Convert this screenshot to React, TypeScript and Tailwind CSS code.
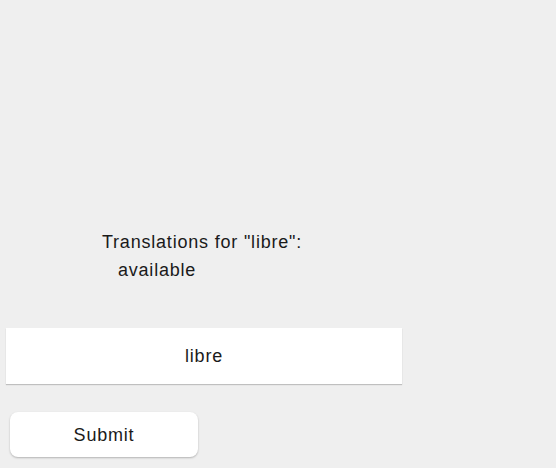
export default function App() {
  return (
    <div className="w-[556px] h-[468px] bg-[#efefef] text-[#1a1a1a] font-['Liberation_Sans',Arial,sans-serif] text-[18px] tracking-[0.8px] flex flex-col">
      <div className="h-[232px]" />
      <div className="w-[404px] flex flex-col items-center">
        <div className="flex flex-col">
          <div className="leading-[20px]">Translations for "libre":</div>
          <div className="leading-[20px] pl-[16px] mt-[8px]">available</div>
        </div>
      </div>
      <div className="h-[48px]" />
      <div className="ml-[6px] w-[396px] h-[56px] bg-white shadow-[0_1px_1px_rgba(0,0,0,0.2)] flex items-center justify-center leading-[20px]">
        libre
      </div>
      <div className="ml-[10px] mt-[28px] w-[188px] h-[45px] bg-white rounded-[8px] shadow-[0_1px_2px_rgba(0,0,0,0.25)] flex items-center justify-center leading-[20px]">
        Submit
      </div>
    </div>
  );
}
